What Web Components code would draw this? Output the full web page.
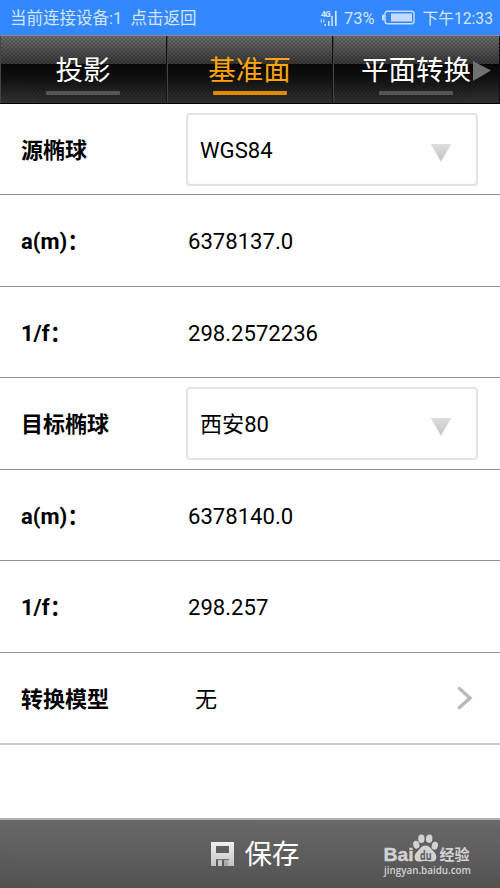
<!DOCTYPE html>
<html lang="zh-CN">
<head>
<meta charset="utf-8">
<title>基准面</title>
<style>
    body {
        margin: 0;
        background: #fff;
        color: #000;
        font-family: Roboto, "Noto Sans CJK SC", sans-serif;
    }
</style>
</head>
<body>
<app-screen>
    <status-bar slot="status" battery="73%" time="下午12:33">当前连接设备:1&nbsp; 点击返回</status-bar>
    <tab-strip slot="tabs">
        <tab-item>投影</tab-item>
        <tab-item active>基准面</tab-item>
        <tab-item more>平面转换</tab-item>
    </tab-strip>
    <form-row label="源椭球" style="--row: 91px"><select-box>WGS84</select-box></form-row>
    <form-row label="a(m)：" style="--row: 92px">6378137.0</form-row>
    <form-row label="1/f：" style="--row: 91px">298.2572236</form-row>
    <form-row label="目标椭球" style="--row: 92px"><select-box>西安80</select-box></form-row>
    <form-row label="a(m)：" style="--row: 91px">6378140.0</form-row>
    <form-row label="1/f：" style="--row: 92px">298.257</form-row>
    <form-row label="转换模型" link style="--row: 92px">无</form-row>
    <save-bar slot="footer">保存</save-bar>
</app-screen>

<script>
class AppScreen extends HTMLElement {
    constructor() {
        super();
        this.attachShadow({ mode: 'open' });
    }

    connectedCallback() {
        this.shadowRoot.innerHTML = `
            <style>
                :host {
                    display: flex;
                    flex-direction: column;
                    width: 500px;
                    height: 888px;
                    overflow: hidden;
                }
                main {
                    flex: 1;
                }
            </style>
            <slot name="status"></slot>
            <slot name="tabs"></slot>
            <main><slot></slot></main>
            <slot name="footer"></slot>
        `;
    }
}

class StatusBar extends HTMLElement {
    constructor() {
        super();
        this.attachShadow({ mode: 'open' });
    }

    connectedCallback() {
        this.shadowRoot.innerHTML = `
            <style>
                :host {
                    display: flex;
                    align-items: center;
                    flex: none;
                    box-sizing: border-box;
                    height: 35px;
                    padding: 2px 7px 0 10px;
                    background: #3388ff;
                    color: #d3e5ff;
                    font-size: 16.5px;
                    line-height: 24px;
                    white-space: nowrap;
                }
                .message {
                    flex: 1;
                }
                .time {
                    font-size: 15.7px;
                }
                .signal {
                    margin-right: 7px;
                }
                .battery {
                    margin: 0 8px 0 7px;
                }
                svg {
                    display: block;
                }
            </style>
            <span class="message"><slot></slot></span>
            <svg class="signal" width="17" height="20" viewBox="0 0 17 20" fill="#d3e5ff">
                <text x="1" y="8" font-family="Open Sans, sans-serif" font-size="8.5" font-weight="700" textLength="10">4G</text>
                <path d="M8 12h1.5v5H8zM11.3 7h1.5v10h-1.5zM15 2h1.7v15H15zM4.5 15h1.5v2H4.5z"/>
                <path d="M0 12l2-2.5V14.5zM5 12l-2-2.5V14.5z" opacity=".65"/>
            </svg>
            <span>${this.getAttribute('battery')}</span>
            <svg class="battery" width="33" height="17" viewBox="0 0 33 17">
                <rect x="3" y="1.2" width="29" height="12.6" rx="2.5" fill="none" stroke="#c5dcff" stroke-width="1.4"/>
                <rect x="0" y="4.5" width="2.5" height="6" rx="1" fill="#c5dcff"/>
                <rect x="9" y="3.5" width="21" height="8" fill="#c5dcff"/>
            </svg>
            <span class="time">${this.getAttribute('time')}</span>
        `;
    }
}

class TabStrip extends HTMLElement {
    constructor() {
        super();
        this.attachShadow({ mode: 'open' });
    }

    connectedCallback() {
        this.shadowRoot.innerHTML = `
            <style>
                :host {
                    display: grid;
                    grid-template-columns: 167px 166px 167px;
                    flex: none;
                    box-sizing: border-box;
                    height: 69px;
                    border-top: 1px solid #8b8b8b;
                    border-bottom: 1px solid #000;
                    /* woven texture over the glossy two-step gradient */
                    background:
                        repeating-linear-gradient(45deg, rgba(0, 0, 0, .14) 0 1.4px, transparent 1.4px 2.83px),
                        repeating-linear-gradient(-45deg, rgba(0, 0, 0, .14) 0 1.4px, transparent 1.4px 2.83px),
                        linear-gradient(#747474 0, #393939 28px, #080808 28px, #121212 42px, #363636 100%);
                }
            </style>
            <slot></slot>
        `;
    }
}

class TabItem extends HTMLElement {
    constructor() {
        super();
        this.attachShadow({ mode: 'open' });
    }

    connectedCallback() {
        const more = this.hasAttribute('more');

        this.shadowRoot.innerHTML = `
            <style>
                :host {
                    display: flex;
                    flex-direction: column;
                    align-items: center;
                    position: relative;
                    box-sizing: border-box;
                    padding-top: 15px;
                    border-right: 1px solid #101010;
                    box-shadow: inset 1px 0 #444;
                    color: #fff;
                    font-size: 27.5px;
                    line-height: 40px;
                    white-space: nowrap;
                    --bar: #555;
                }
                :host([active]) {
                    color: #ffa50a;
                    --bar: #e08a00;
                }
                i {
                    width: 74px;
                    height: 4px;
                    border-radius: 1px;
                    background: var(--bar);
                }
                svg {
                    position: absolute;
                    right: 7px;
                    top: 24px;
                }
            </style>
            <slot></slot>
            <i></i>
            ${more
                ? `<svg width="20" height="22" viewBox="0 0 20 22"><path d="M1 1L19 10.5 1 21z" fill="#707070"/></svg>`
                : ''
            }
        `;
    }
}

class FormRow extends HTMLElement {
    constructor() {
        super();
        this.attachShadow({ mode: 'open' });
    }

    connectedCallback() {
        const label = this.getAttribute('label');
        const link = this.hasAttribute('link');

        this.shadowRoot.innerHTML = `
            <style>
                :host {
                    display: grid;
                    grid-template-columns: 165px 1fr auto;
                    align-items: center;
                    box-sizing: border-box;
                    height: var(--row);
                    padding: 0 22px 0 21px;
                    border-bottom: 1px solid #919191;
                    font-size: 22.1px;
                    line-height: 32px;
                }
                :host([link]) {
                    border-bottom: 2px solid #c9c9c9;
                }
                .label {
                    padding-top: 3px;
                    font-size: 22px;
                    font-weight: 700;
                    white-space: nowrap;
                }
                .value {
                    padding: 1px 0 0 ${link ? 9 : 2}px;
                }
                ::slotted(select-box) {
                    margin: -1px 0 0 -2px;
                }
                svg {
                    display: block;
                    margin-right: 5px;
                }
            </style>
            <span class="label">${label}</span>
            <span class="value"><slot></slot></span>
            ${link
                ? `<svg width="16" height="24" viewBox="0 0 16 24">
                       <path d="M2.5 2.5L13 12 2.5 21.5" fill="none" stroke="#b9b9b9" stroke-width="3.4" stroke-linecap="round"/>
                   </svg>`
                : ''
            }
        `;
    }
}

class SelectBox extends HTMLElement {
    constructor() {
        super();
        this.attachShadow({ mode: 'open' });
    }

    connectedCallback() {
        this.shadowRoot.innerHTML = `
            <style>
                :host {
                    display: flex;
                    align-items: center;
                    justify-content: space-between;
                    box-sizing: border-box;
                    width: 292px;
                    height: 73px;
                    padding: 1px 24px 0 12px;
                    border: 2px solid #e3e3e3;
                    border-radius: 4px;
                    box-shadow: inset 0 0 1px #ddd;
                }
                svg {
                    display: block;
                    margin-top: 6px;
                }
            </style>
            <slot></slot>
            <svg width="22" height="20" viewBox="0 0 22 20">
                <defs>
                    <linearGradient id="g" x1="0" y1="0" x2="0" y2="1">
                        <stop offset="0" stop-color="#dedede"/>
                        <stop offset="1" stop-color="#c2c2c2"/>
                    </linearGradient>
                </defs>
                <path d="M1.5 1.5h19L11 18.5z" fill="url(#g)" stroke="#dcdcdc" stroke-linejoin="round"/>
            </svg>
        `;
    }
}

class BaiduMark extends HTMLElement {
    constructor() {
        super();
        this.attachShadow({ mode: 'open' });
    }

    connectedCallback() {
        this.shadowRoot.innerHTML = `
            <style>
                :host {
                    display: block;
                }
                svg {
                    display: block;
                }
            </style>
            <svg width="92" height="48" viewBox="0 0 92 48" fill="#d2d2d2">
                <text x="0.5" y="30.5" font-family="Liberation Sans, sans-serif" font-size="19" font-weight="700" stroke="#d2d2d2" stroke-width=".4" textLength="30" lengthAdjust="spacingAndGlyphs">Bai</text>
                <ellipse cx="33.3" cy="14.7" rx="3.1" ry="4" transform="rotate(-12 33.3 14.7)"/>
                <ellipse cx="38.4" cy="8.7" rx="3.2" ry="4.2"/>
                <ellipse cx="46.2" cy="8.7" rx="3.2" ry="4.2" transform="rotate(8 46.2 8.7)"/>
                <ellipse cx="51.8" cy="15.7" rx="3.1" ry="4" transform="rotate(15 51.8 15.7)"/>
                <path d="M42.5 15.5c4 0 5.5 3.5 8.2 6 4 3.6 3.6 10-1.4 10-2.6 0-4.2-.6-6.8-.6s-4.2.6-6.8.6c-5 0-5.4-6.4-1.4-10 2.7-2.5 4.2-6 8.2-6z"/>
                <text x="37" y="29.5" font-family="Open Sans, sans-serif" font-size="12" font-weight="700" fill="#5b5b5b" textLength="11.5" lengthAdjust="spacingAndGlyphs">du</text>
                <text x="56.5" y="30" font-family="Noto Sans CJK SC, sans-serif" font-size="15" font-weight="700">经验</text>
                <text x="1" y="43.5" font-family="Open Sans, sans-serif" font-size="10" font-weight="600" textLength="87" lengthAdjust="spacingAndGlyphs">jingyan.baidu.com</text>
            </svg>
        `;
    }
}

class SaveBar extends HTMLElement {
    constructor() {
        super();
        this.attachShadow({ mode: 'open' });
    }

    connectedCallback() {
        this.shadowRoot.innerHTML = `
            <style>
                :host {
                    display: grid;
                    grid-template-columns: 1fr auto 1fr;
                    align-items: center;
                    flex: none;
                    box-sizing: border-box;
                    height: 70px;
                    padding: 0 0 0 9px;
                    border-top: 2px solid #b0b0b0;
                    background:
                        repeating-linear-gradient(45deg, rgba(255, 255, 255, .025) 0 1.4px, transparent 1.4px 2.83px),
                        linear-gradient(#676767, #505050);
                    color: #fff;
                    font-size: 27.5px;
                    line-height: 40px;
                }
                .action {
                    grid-column: 2;
                    display: flex;
                    align-items: center;
                    gap: 11px;
                    padding-top: 2px;
                }
                .action svg {
                    margin-top: -2px;
                }
                baidu-mark {
                    justify-self: end;
                    margin-right: 25px;
                }
            </style>
            <div class="action">
                <svg width="24" height="26" viewBox="0 0 24 26">
                    <defs>
                        <linearGradient id="d" x1="0" y1="0" x2="0" y2="1">
                            <stop offset="0" stop-color="#f0f0f0"/>
                            <stop offset="1" stop-color="#c4c4c4"/>
                        </linearGradient>
                    </defs>
                    <path fill="url(#d)" fill-rule="evenodd" d="M1 1H24V25H1zM6 5V12H19V5zM6 19V25H8V19zM12 19V25H14V19z"/>
                    <path d="M6 18H19V19.2H6z" fill="#777"/>
                    <path d="M14 19.200H18V25H14z" fill="#aaa"/>
                </svg>
                <span><slot></slot></span>
            </div>
            <baidu-mark></baidu-mark>
        `;
    }
}

customElements.define('app-screen', AppScreen);
customElements.define('status-bar', StatusBar);
customElements.define('tab-strip', TabStrip);
customElements.define('tab-item', TabItem);
customElements.define('form-row', FormRow);
customElements.define('select-box', SelectBox);
customElements.define('baidu-mark', BaiduMark);
customElements.define('save-bar', SaveBar);
</script>
</body>
</html>
